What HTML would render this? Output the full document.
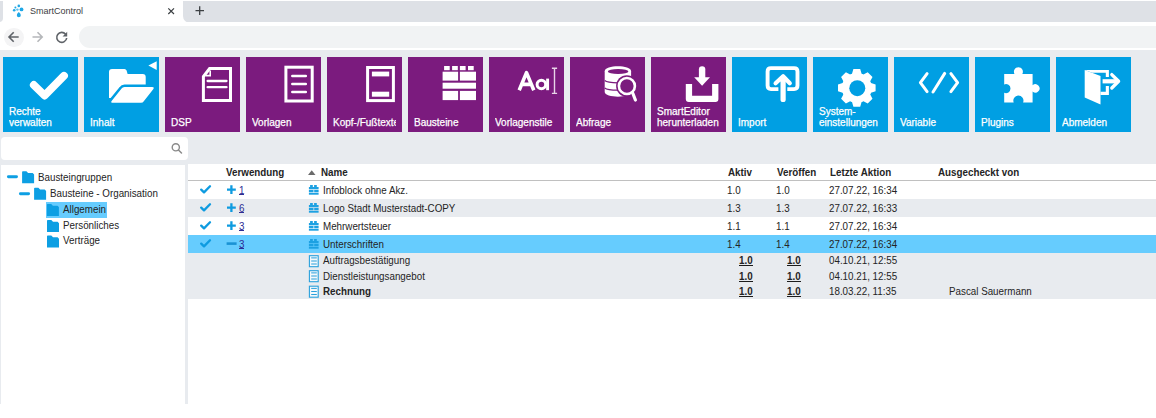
<!DOCTYPE html>
<html><head><meta charset="utf-8">
<style>
*{margin:0;padding:0;box-sizing:border-box}
html,body{width:1156px;height:418px;overflow:hidden;background:#fff;font-family:"Liberation Sans",sans-serif;color:#262626}
.abs{position:absolute}
#tabstrip{left:0;top:0;width:1156px;height:23px;background:#fff}
#toolbar{left:0;top:22.4px;width:1156px;height:27.6px;background:#fff}
#omni{left:78.6px;top:25.8px;width:1100px;height:22px;background:#f1f3f4;border-radius:11px}
#content{left:0;top:50px;width:1156px;height:354px;background:#e8ebef}
.tile{position:absolute;top:57px;width:75px;height:75px;background:#009fe3;color:#fff;font-size:10px;line-height:11px}
.tile.p{background:#7b1b7e}
.tile .lbl{position:absolute;left:6px;bottom:4px;white-space:nowrap;overflow:hidden;width:63px;-webkit-text-stroke:0.25px #fff}
.tile svg{position:absolute;left:0;top:0}
#search{left:1px;top:137.3px;width:186.5px;height:22.7px;background:#fff;border-radius:4px}
#tree{left:1px;top:165px;width:184px;height:239px;background:#fff}
#table{left:188px;top:164px;width:968px;height:240px;background:#fff}
.t{position:absolute;font-size:10.6px;line-height:12px;white-space:nowrap;color:#242424;transform-origin:0 0;transform:translateY(-0.5px) scaleX(0.925)}
.b{font-weight:bold}
.row{position:absolute;left:188px;width:968px}
.lnk{color:#2d2d94}
</style></head><body>
<!-- browser chrome -->
<div id="tabstrip" class="abs"></div>
<div class="abs" style="left:0;top:0;width:1156px;height:1px;background:#fff"></div>
<div class="abs" style="left:3px;top:0;width:180px;height:23px;background:#fff"></div>
<div class="abs" style="left:0;top:0;width:3px;height:23px;background:#fff"></div>
<div class="abs" style="left:-6px;top:1px;width:9px;height:21px;background:#dee1e6;border-bottom-right-radius:4px"></div>
<div class="abs" style="left:183px;top:1px;width:980px;height:22px;background:#dee1e6;border-bottom-left-radius:7px"></div>
<div class="abs" style="left:86px;top:40px;width:1px;height:2px;background:#b9bbbe"></div>
<div id="toolbar" class="abs"></div>
<div id="omni" class="abs"></div>
<div class="abs" style="left:4px;top:27.5px;width:19.5px;height:19.5px;border-radius:50%;background:#f4f4f5"></div>
<svg class="abs" style="left:0;top:0" width="220" height="50">
  <!-- favicon -->
  <g fill="#1ea7e6">
    <circle cx="18.8" cy="5.9" r="1.3"/><circle cx="15.4" cy="7.5" r="1"/><circle cx="21.5" cy="9.4" r="1.9"/><circle cx="17.4" cy="9.6" r="1.2" fill="#5cc3ee"/><circle cx="14.2" cy="10.3" r="1.3"/><path d="M18.8 12 Q21 14 20.8 15.2 A2 2 0 0 1 16.8 15.2 Q16.6 14 18.8 12 Z"/>
  </g>
  <!-- close -->
  <path d="M168.3 8.3 L174 14 M174 8.3 L168.3 14" stroke="#3c4043" stroke-width="1.2"/>
  <!-- plus -->
  <path d="M195.5 10.7 H204 M199.7 6.3 V15" stroke="#3c4043" stroke-width="1.3"/>
  <!-- back -->
  <path d="M18.7 37 H9.5 M13.7 32.2 L9 37 L13.7 41.8" stroke="#5f6368" stroke-width="1.6" fill="none"/>
  <!-- forward -->
  <path d="M32.5 37 H41.7 M37.5 32.2 L42.2 37 L37.5 41.8" stroke="#b5b7ba" stroke-width="1.6" fill="none"/>
  <!-- reload -->
  <path d="M65.6 34.2 A5 5 0 1 0 66.7 38" stroke="#5f6368" stroke-width="1.6" fill="none"/>
  <path d="M67.2 31.8 V36.4 H62.6 Z" fill="#5f6368"/>
</svg>
<div class="abs t" style="left:30px;top:5px;font-size:9.6px;color:#3c4043;transform:scaleX(0.94)">SmartControl</div>

<div id="content" class="abs"></div>

<!-- tiles -->
<div class="tile" style="left:3px">
  <svg width="75" height="75"><path d="M30.8 27.9 L41.6 38.6 L61 18.8" stroke="#fff" stroke-width="7.8" stroke-linecap="round" stroke-linejoin="round" fill="none"/></svg>
  <div class="lbl">Rechte<br>verwalten</div>
</div>
<div class="tile" style="left:84px">
  <svg width="75" height="75">
    <defs><clipPath id="fc"><rect x="0" y="0" width="75" height="41"/></clipPath></defs>
    <path clip-path="url(#fc)" d="M25 15 Q25 12 28 12 L40.5 12 Q42 12 42.6 13.5 L43.6 17 L58.7 17 Q61.7 17 61.7 20 L61.7 45 L25 45 Z" fill="#fff"/>
    <path d="M40.5 30.1 L68.3 30.1 Q70.6 30.1 69.4 32 L59.8 44.2 Q58.8 45.7 57 45.7 L28.7 45.7 Q26.4 45.7 27.6 43.9 L37.6 31.6 Q38.6 30.1 40.5 30.1 Z" fill="#009fe3" stroke="#009fe3" stroke-width="5" stroke-linejoin="round"/>
    <path d="M40.5 30.1 L68.3 30.1 Q70.6 30.1 69.4 32 L59.8 44.2 Q58.8 45.7 57 45.7 L28.7 45.7 Q26.4 45.7 27.6 43.9 L37.6 31.6 Q38.6 30.1 40.5 30.1 Z" fill="#fff"/>
    <path d="M72.7 4.2 L72.7 13 L64.4 8.6 Z" fill="#fff"/>
  </svg>
  <div class="lbl">Inhalt</div>
</div>
<div class="tile p" style="left:165px">
  <svg width="75" height="75">
    <path d="M44.6 11.5 L65.5 11.5 L65.5 43.6 L38.4 43.6 L38.4 19.6 Z" stroke="#fff" stroke-width="3" fill="none" stroke-linejoin="miter"/>
    <path d="M40.6 18.6 H45.2 V13.4" stroke="#fff" stroke-width="1.6" fill="none"/>
    <path d="M42.6 24 H61.5 M42.6 30.2 H61.5" stroke="#fff" stroke-width="2.3" stroke-linecap="round"/>
  </svg>
  <div class="lbl">DSP</div>
</div>
<div class="tile p" style="left:246px">
  <svg width="75" height="75">
    <rect x="39.9" y="10.2" width="26.3" height="33.8" stroke="#fff" stroke-width="3" fill="none"/>
    <path d="M46.3 18.9 H59.8 M46.3 26.9 H59.8 M46.3 35 H59.8" stroke="#fff" stroke-width="2.5" stroke-linecap="round"/>
  </svg>
  <div class="lbl">Vorlagen</div>
</div>
<div class="tile p" style="left:327px">
  <svg width="75" height="75">
    <rect x="40.6" y="10.5" width="25.8" height="33.1" stroke="#fff" stroke-width="3" fill="none"/>
    <rect x="44.9" y="14.6" width="17.3" height="4.8" fill="#fff"/>
    <rect x="44.9" y="34.7" width="17.3" height="5" fill="#fff"/>
  </svg>
  <div class="lbl">Kopf-/Fußtexte</div>
</div>
<div class="tile p" style="left:408px">
  <svg width="75" height="75" fill="#fff">
    <rect x="36.1" y="9" width="5.6" height="4.2"/><rect x="44.1" y="9" width="5.7" height="4.2"/><rect x="51.9" y="9" width="5.7" height="4.2"/><rect x="60" y="9" width="5.7" height="4.2"/>
    <rect x="34.6" y="14.7" width="15.5" height="8.9"/><rect x="51.9" y="14.7" width="16.1" height="8.9"/>
    <rect x="34.6" y="25.7" width="33.4" height="6"/>
    <rect x="34.6" y="33.9" width="15.5" height="9.2"/><rect x="51.9" y="33.9" width="16.1" height="9.2"/>
  </svg>
  <div class="lbl">Bausteine</div>
</div>
<div class="tile p" style="left:489px">
  <svg width="75" height="75">
    <path d="M30.2 33.2 L37.5 15.6 L44.8 33.2 M33.2 27.4 H41.8" stroke="#fff" stroke-width="3.6" stroke-linejoin="round" fill="none"/>
    <circle cx="52.4" cy="27.5" r="4.3" stroke="#fff" stroke-width="3" fill="none"/>
    <path d="M58.6 21.6 V33.2" stroke="#fff" stroke-width="2.9"/>
    <path d="M62.9 11.2 H68.1 M65.5 11.2 V36.4 M62.9 36.4 H68.1" stroke="#e8d4e8" stroke-width="1.4" fill="none"/>
  </svg>
  <div class="lbl">Vorlagenstile</div>
</div>
<div class="tile p" style="left:570px">
  <svg width="75" height="75">
    <path d="M34.7 14.2 C34.7 7.6 61.1 7.6 61.1 14.2 L61.1 35 C61.1 41.2 34.7 41.2 34.7 35 Z" fill="#fff"/>
    <ellipse cx="48.1" cy="14.5" rx="10.3" ry="2.4" fill="#7b1b7e"/>
    <path d="M34.7 17.6 C38 21.6 58 21.6 61.1 17.6" stroke="#7b1b7e" stroke-width="0" fill="none"/>
    <path d="M34.7 23.6 C38 26.6 58 26.6 61.1 23.6" stroke="#7b1b7e" stroke-width="1.3" fill="none"/>
    <path d="M34.7 30.9 C38 33.9 58 33.9 61.1 30.9" stroke="#7b1b7e" stroke-width="1.3" fill="none"/>
    <circle cx="56.9" cy="29" r="10.8" fill="#7b1b7e"/>
    <circle cx="56.9" cy="29" r="8" stroke="#fff" stroke-width="2.6" fill="#7b1b7e"/>
    <path d="M62.8 36.2 L65.4 43" stroke="#fff" stroke-width="3.2" stroke-linecap="round"/>
  </svg>
  <div class="lbl">Abfrage</div>
</div>
<div class="tile p" style="left:651px">
  <svg width="75" height="75" fill="#fff">
    <path d="M47.9 21 V12.4 A3.2 3.2 0 0 1 54.3 12.4 V21 Z"/>
    <path d="M43.2 20.3 H59 L51.1 28.7 Z"/>
    <path d="M34.8 27.1 H41.1 V38.7 H61.1 V27.1 H67.4 V42 Q67.4 45 64.4 45 H37.8 Q34.8 45 34.8 42 Z"/>
  </svg>
  <div class="lbl">SmartEditor<br>herunterladen</div>
</div>
<div class="tile" style="left:732px">
  <svg width="75" height="75">
    <path d="M46.4 32.1 H39 Q35.6 32.1 35.6 28.6 V14.5 Q35.6 11.1 39 11.1 H62.1 Q65.5 11.1 65.5 14.5 V28.6 Q65.5 32.1 62.1 32.1 H55.3" stroke="#fff" stroke-width="3.9" fill="none"/>
    <path d="M51.1 22 V42.5" stroke="#fff" stroke-width="5.2" stroke-linecap="round"/>
    <path d="M43.6 26.3 L51.1 19.3 L57.8 26.3" stroke="#fff" stroke-width="4.2" stroke-linecap="round" stroke-linejoin="round" fill="none"/>
    <path d="M45.5 24.5 L51.1 19.3 L56.5 24.5 Z" fill="#fff"/>
  </svg>
  <div class="lbl">Import</div>
</div>
<div class="tile" style="left:813px">
  <svg width="75" height="75">
    <circle cx="43.8" cy="30.9" r="14.6" fill="#fff"/><path fill="#fff" d="M39.00 16.70 L40.40 12.10 L47.20 12.10 L48.60 16.70 L50.45 17.46 L54.69 15.20 L59.50 20.01 L57.24 24.25 L58.00 26.10 L62.60 27.50 L62.60 34.30 L58.00 35.70 L57.24 37.55 L59.50 41.79 L54.69 46.60 L50.45 44.34 L48.60 45.10 L47.20 49.70 L40.40 49.70 L39.00 45.10 L37.15 44.34 L32.91 46.60 L28.10 41.79 L30.36 37.55 L29.60 35.70 L25.00 34.30 L25.00 27.50 L29.60 26.10 L30.36 24.25 L28.10 20.01 L32.91 15.20 L37.15 17.46 Z"/>
    <circle cx="44.3" cy="31.2" r="8" fill="#009fe3"/>
  </svg>
  <div class="lbl">System-<br>einstellungen</div>
</div>
<div class="tile" style="left:894px">
  <svg width="75" height="75">
    <path d="M33.1 16.6 L26.4 25.6 L33.1 34.6 M50.7 16.4 L39 35 M56.9 16.6 L63.6 25.6 L56.9 34.6" stroke="#fff" stroke-width="3" stroke-linecap="round" stroke-linejoin="round" fill="none"/>
  </svg>
  <div class="lbl">Variable</div>
</div>
<div class="tile" style="left:975px">
  <svg width="75" height="75">
    <path fill="#fff" d="M29.2 17 H39.5 A4.5 4.5 0 1 1 47.3 17 H57.6 V28.2 A4.2 4.2 0 1 1 57.6 34.6 V45.4 H48.1 A5.05 5.05 0 1 0 38.7 45.4 H29.2 V35.8 A4.55 4.55 0 1 0 29.2 27.4 Z"/>
  </svg>
  <div class="lbl">Plugins</div>
</div>
<div class="tile" style="left:1056px">
  <svg width="75" height="75" fill="#fff">
    <path d="M28.7 13 H52.9 V20 H49.8 V15.8 H36.2 Z"/>
    <path d="M49.8 29 H52.9 V37.9 H44.5 V34.8 H49.8 Z"/>
    <path d="M28.7 13 L44.5 19 V47.4 L28.7 40.6 Z"/>
    <path d="M46.6 24.3 H62" stroke="#fff" stroke-width="4.2" stroke-linecap="butt"/>
    <path d="M55.8 17.6 L62.6 24.3 L55.8 31" stroke="#fff" stroke-width="3.3" stroke-linecap="round" stroke-linejoin="round" fill="none"/>
  </svg>
  <div class="lbl">Abmelden</div>
</div>

<!-- search -->
<div id="search" class="abs"></div>
<svg class="abs" style="left:168px;top:140px" width="18" height="18"><circle cx="7.8" cy="7.3" r="3.6" stroke="#8a8a8a" stroke-width="1.4" fill="none"/><path d="M10.5 10 L13.5 13" stroke="#8a8a8a" stroke-width="1.5" stroke-linecap="round"/></svg>

<!-- tree -->
<div id="tree" class="abs"></div>
<div class="abs" style="left:45.5px;top:202.2px;width:61.2px;height:15.5px;background:#66ccfe"></div>
<svg class="abs" style="left:0;top:160px" width="70" height="100">
  <defs><path id="fold" d="M0 0.8 Q0 0 0.8 0 H4.3 L6 1.8 H10.6 L12 3.2 V12 H0 Z" fill="#0d9fe3"/></defs>
  <path d="M8.4 16.8 H16.5" stroke="#0d9fe3" stroke-width="2.9" stroke-linecap="round"/>
  <use href="#fold" x="22.1" y="11.2"/>
  <path d="M20.4 33.7 H28.6" stroke="#0d9fe3" stroke-width="2.9" stroke-linecap="round"/>
  <use href="#fold" x="34.1" y="27.7"/>
  <use href="#fold" x="46.9" y="43.9"/>
  <use href="#fold" x="47" y="60"/>
  <use href="#fold" x="47" y="75.5"/>
</svg>
<div class="t" style="left:37.5px;top:170.5px">Bausteingruppen</div>
<div class="t" style="left:49.5px;top:187.3px">Bausteine - Organisation</div>
<div class="t" style="left:62.8px;top:203.1px">Allgemein</div>
<div class="t" style="left:62.8px;top:218.6px">Persönliches</div>
<div class="t" style="left:62.8px;top:234px">Verträge</div>

<!-- table -->
<div id="table" class="abs"></div>
<div class="row" style="top:180px;height:1px;background:#c0c0c0"></div>
<div class="row" style="top:199px;height:18px;background:#e8ebef"></div>
<div class="row" style="top:235px;height:18px;background:#66ccfe"></div>
<div class="row" style="top:253px;height:46px;background:#e8ebef"></div>

<div class="t b" style="left:225.8px;top:166.3px">Verwendung</div>
<svg class="abs" style="left:306px;top:168px" width="12" height="10"><path d="M2 7 L9.5 7 L5.75 2.2 Z" fill="#6b6b6b"/></svg>
<div class="t b" style="left:320.6px;top:166.3px">Name</div>
<div class="t b" style="left:727.5px;top:166.3px">Aktiv</div>
<div class="t b" style="left:776.5px;top:166.3px">Veröffen</div>
<div class="t b" style="left:829.5px;top:166.3px">Letzte Aktion</div>
<div class="t b" style="left:937.5px;top:166.3px">Ausgecheckt von</div>

<svg class="abs" style="left:190px;top:181px" width="130" height="118">
  <defs>
    <path id="chk" d="M11.2 8.6 L14 11.4 L20 5.3" stroke="#0e9be0" stroke-width="2.3" stroke-linecap="round" stroke-linejoin="round" fill="none"/>
    <path id="plus" d="M37 8.6 H45.8 M41.4 4.2 V13" stroke="#0e9be0" stroke-width="2.3"/>
    <g id="blk" fill="#1da1e2"><path d="M120.1 3.9 H122.8 V6 H124.1 V3.9 H126.8 V6 H128.6 V8.2 H118.9 V6 H120.1 Z"/><rect x="118.9" y="8.9" width="4.6" height="2.4"/><rect x="124.2" y="8.9" width="4.4" height="2.4"/><rect x="118.9" y="11.9" width="9.7" height="1.8"/></g>
    <g id="doc"><rect x="119.4" y="74.7" width="8.8" height="11" stroke="#2aa0dc" stroke-width="1.1" fill="#f4f8fb"/><path d="M121.2 76.9 H126.8 M121.2 80 H126.8 M121.2 83 H126.8" stroke="#2aa0dc" stroke-width="1"/></g>
  </defs>
  <use href="#chk" y="0"/><use href="#plus" y="0"/><use href="#blk" y="0"/>
  <use href="#chk" y="18"/><use href="#plus" y="18"/><use href="#blk" y="18"/>
  <use href="#chk" y="36"/><use href="#plus" y="36"/><use href="#blk" y="36"/>
  <use href="#chk" y="54"/><path d="M36.6 62.6 H46.6" stroke="#1a92d4" stroke-width="2.6"/><use href="#blk" y="54"/>
  <use href="#doc" y="0"/><use href="#doc" y="15"/><use href="#doc" y="30.5"/>
</svg>

<div class="t lnk" style="left:238.6px;top:183.7px">1</div>
<div class="t lnk" style="left:238.6px;top:201.7px">6</div>
<div class="t lnk" style="left:238.6px;top:219.7px">3</div>
<div class="t lnk" style="left:238.6px;top:237.7px">3</div>

<div class="t" style="left:323.3px;top:183.7px">Infoblock ohne Akz.</div>
<div class="t" style="left:323.3px;top:201.7px">Logo Stadt Musterstadt-COPY</div>
<div class="t" style="left:323.3px;top:219.7px">Mehrwertsteuer</div>
<div class="t" style="left:323.3px;top:237.7px">Unterschriften</div>
<div class="t" style="left:323.3px;top:254.3px">Auftragsbestätigung</div>
<div class="t" style="left:323.3px;top:269.6px">Dienstleistungsangebot</div>
<div class="t b" style="left:323.3px;top:284.5px">Rechnung</div>

<div class="t" style="left:727px;top:183.7px">1.0</div><div class="t" style="left:776px;top:183.7px">1.0</div><div class="t" style="left:829.3px;top:183.7px">27.07.22, 16:34</div>
<div class="t" style="left:727px;top:201.7px">1.3</div><div class="t" style="left:776px;top:201.7px">1.3</div><div class="t" style="left:829.3px;top:201.7px">27.07.22, 16:33</div>
<div class="t" style="left:727px;top:219.7px">1.1</div><div class="t" style="left:776px;top:219.7px">1.1</div><div class="t" style="left:829.3px;top:219.7px">27.07.22, 16:34</div>
<div class="t" style="left:727px;top:237.7px">1.4</div><div class="t" style="left:776px;top:237.7px">1.4</div><div class="t" style="left:829.3px;top:237.7px">27.07.22, 16:34</div>

<div class="t b" style="left:738.5px;top:254.3px">1.0</div><div class="t b" style="left:787.3px;top:254.3px">1.0</div><div class="t" style="left:829.3px;top:254.3px">04.10.21, 12:55</div>
<div class="t b" style="left:738.5px;top:269.6px">1.0</div><div class="t b" style="left:787.3px;top:269.6px">1.0</div><div class="t" style="left:829.3px;top:269.6px">04.10.21, 12:55</div>
<div class="t b" style="left:738.5px;top:284.5px">1.0</div><div class="t b" style="left:787.3px;top:284.5px">1.0</div><div class="t" style="left:829.3px;top:284.5px">18.03.22, 11:35</div>
<div class="t" style="left:948.8px;top:284.5px">Pascal Sauermann</div>
<div class="abs" style="left:238.8px;top:194px;width:5.6px;height:1px;background:#2d2d94"></div>
<div class="abs" style="left:238.8px;top:212px;width:5.6px;height:1px;background:#2d2d94"></div>
<div class="abs" style="left:238.8px;top:230px;width:5.6px;height:1px;background:#2d2d94"></div>
<div class="abs" style="left:238.8px;top:248px;width:5.6px;height:1px;background:#2d2d94"></div>
<div class="abs" style="left:738.6px;top:265px;width:14px;height:1px;background:#1c1c1c"></div>
<div class="abs" style="left:787.4px;top:265px;width:14px;height:1px;background:#1c1c1c"></div>
<div class="abs" style="left:738.6px;top:281px;width:14px;height:1px;background:#1c1c1c"></div>
<div class="abs" style="left:787.4px;top:281px;width:14px;height:1px;background:#1c1c1c"></div>
<div class="abs" style="left:738.6px;top:296px;width:14px;height:1px;background:#1c1c1c"></div>
<div class="abs" style="left:787.4px;top:296px;width:14px;height:1px;background:#1c1c1c"></div>
</body></html>
